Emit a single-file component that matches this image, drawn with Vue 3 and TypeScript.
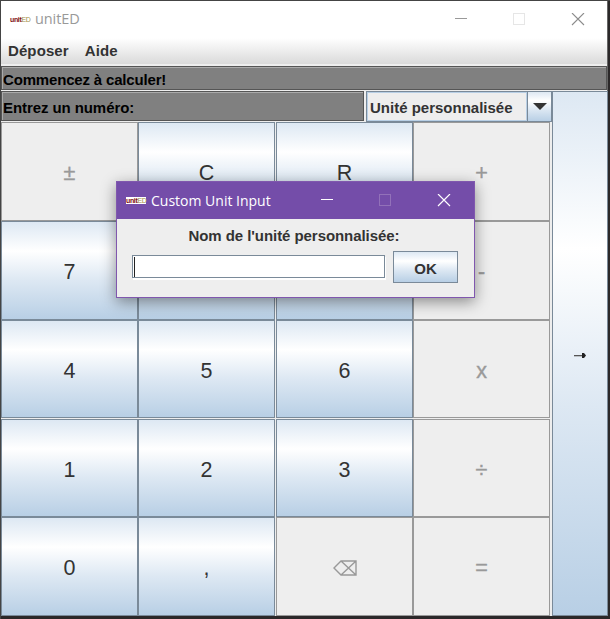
<script setup lang="ts">
interface Key {
  label: string
  disabled?: boolean
  icon?: boolean
}

const menus: string[] = ['Déposer', 'Aide']
const keys: Key[] = [
  { label: '±', disabled: true }, { label: 'C' }, { label: 'R' }, { label: '+', disabled: true },
  { label: '7' }, { label: '8' }, { label: '9' }, { label: '-', disabled: true },
  { label: '4' }, { label: '5' }, { label: '6' }, { label: 'x', disabled: true },
  { label: '1' }, { label: '2' }, { label: '3' }, { label: '÷', disabled: true },
  { label: '0' }, { label: ',' }, { label: '⌫', disabled: true, icon: true }, { label: '=', disabled: true },
]
</script>

<template>
  <div class="desktop">
    <main class="window">
      <header class="titlebar">
        <span class="logo"><b>unit</b><i>ED</i></span>
        <span class="title">unitED</span>
        <svg class="controls" width="130" height="14" viewBox="0 0 130 14" fill="none">
          <path d="M0 5.5H12" stroke="#999" />
          <rect x="58.5" y="0.5" width="11" height="11" stroke="#e6e6e6" />
          <path d="M117 0L129 12M129 0L117 12" stroke="#8c8c8c" stroke-width="1.1" />
        </svg>
      </header>
      <nav class="menubar">
        <span v-for="m in menus" :key="m">{{ m }}</span>
      </nav>
      <div class="field status"><span>Commencez à calculer!</span></div>
      <div class="body">
        <section class="left">
          <div class="inputs">
            <div class="field prompt"><span>Entrez un numéro:</span></div>
            <div class="combo">
              <span class="value"><em>Unité personnalisée</em></span>
              <span class="drop">
                <svg width="14" height="7" viewBox="0 0 14 7"><path d="M0 0H14L7 7Z" fill="#333" /></svg>
              </span>
            </div>
          </div>
          <div class="keypad">
            <button v-for="k in keys" :key="k.label" class="key" :class="{ off: k.disabled }">
              <svg v-if="k.icon" width="24" height="16" viewBox="0 0 24 16" fill="none" stroke="#999" stroke-width="1.4">
                <path d="M1 8L8 1H23V15H8ZM8 1L23 15M8 15L23 1" />
              </svg>
              <span v-else>{{ k.label }}</span>
            </button>
          </div>
        </section>
        <button class="convert">
          <svg width="12" height="7" viewBox="0 0 12 7"><path d="M0 3H9V4.3H0Z" fill="#555" /><path d="M8 1H10L12 3.5L10 6H8Z" fill="#222" /></svg>
        </button>
      </div>
    </main>

    <div class="dialog">
      <header class="dialog-title">
        <span class="logo"><b>unit</b><i>ED</i></span>
        <span class="title">Custom Unit Input</span>
        <svg class="controls" width="130" height="14" viewBox="0 0 130 14" fill="none">
          <path d="M0 5.5H12" stroke="#fff" />
          <rect x="58.5" y="0.5" width="11" height="11" stroke="#9271b9" />
          <path d="M117 0L129 12M129 0L117 12" stroke="#fff" stroke-width="1.2" />
        </svg>
      </header>
      <div class="question"><span>Nom de l'unité personnalisée:</span></div>
      <div class="answer">
        <div class="textbox"><span class="caret"></span></div>
        <button class="ok"><span>OK</span></button>
      </div>
    </div>
  </div>
</template>

<style>
body { margin: 0; overflow: hidden; }
</style>

<style scoped>
* { box-sizing: border-box; }
.desktop {
  position: relative;
  width: 610px;
  height: 619px;
  padding: 1px 0 0 1px;
  background: #2b2829;
  box-shadow: inset 1px 1px #444;
  font: bold 15px/18px "Liberation Sans", Arial, sans-serif;
  color: #333;
}
.window { width: 607px; height: 615px; background: #eee; border-right: 1px solid #666; display: flex; flex-direction: column; }
.titlebar { height: 37px; flex: none; background: #fff; display: flex; align-items: center; padding: 0 22px 0 9px; }
.logo {
  width: 20px; height: 7px; background: #fff; display: flex; align-items: center; justify-content: center;
  font: bold 7px/7px "Liberation Sans", Arial, sans-serif; letter-spacing: -.3px; white-space: nowrap;
}
.logo b { color: #7d1010; }
.logo i { color: #a39049; font-style: normal; font-weight: normal; letter-spacing: -.6px; }
.title { font: 15px/20px "Open Sans", "Noto Sans", sans-serif; }
.titlebar .title { color: #999; margin-left: 5px; font-size: 14.5px; letter-spacing: -.1px; padding-bottom: 1px; }
.controls { margin-left: auto; flex: none; }
.menubar { height: 28px; flex: none; display: flex; gap: 16px; padding: 3px 7px 0; letter-spacing: .1px; background: linear-gradient(#fff, #dadada 26px, #eee 26px); }
.menubar span { height: 20px; line-height: 20px; }
.field { background: #808080; border: 1px solid #555; box-shadow: inset 1px 1px #aaa; color: #000; display: flex; align-items: center; padding-left: 1px; }
.status { height: 24px; width: 606px; margin-bottom: 1px; flex: none; letter-spacing: -.17px; }
.status span { padding-top: 3px; }
.body { display: flex; gap: 2px; height: 525px; }
.left { width: 549px; flex: none; }
.inputs { display: flex; gap: 2px; height: 31px; width: 551px; }
.prompt { width: 363px; height: 30px; flex: none; letter-spacing: -.08px; }
.prompt span { padding-top: 3px; }
.combo { width: 186px; height: 31px; display: flex; border: 1px solid #7a8a99; }
.value { flex: 1; border: 1px solid #b8cfe5; display: flex; align-items: center; padding: 3px 0 0 2px; white-space: nowrap; }
.value em { font-style: normal; }
.drop { width: 24px; border-left: 1px solid #7a8a99; display: grid; place-items: center; background: linear-gradient(#dde8f3, #fff 30%, #dde8f3 60%, #b8cfe5); }
.keypad { display: grid; grid-template-columns: 137px 138px 137px 137px; grid-template-rows: 99px 99px 99px 98px 99px; }
button { margin: 0; padding: 0; font: inherit; color: #333; border: 1px solid #7a8a99; border-radius: 0; background: linear-gradient(#dde8f3, #fff 30%, #dde8f3 60%, #b8cfe5); display: flex; align-items: center; justify-content: center; }
.key { font-weight: normal; font-size: 21.5px; line-height: 24px; padding-top: 3px; }
.key:nth-child(4n + 2) { margin-right: 1px; }
.key:nth-child(n + 9):nth-child(-n + 12) { margin-bottom: 1px; }
.off { background: #eee; border-color: #999; color: #999; }
.off span { -webkit-text-stroke: .4px #999; }
.convert { width: 56px; height: 525px; flex: none; padding-top: 4px; }
.dialog {
  position: absolute;
  left: 116px;
  top: 181px;
  width: 359px;
  height: 117px;
  border: 1px solid #8057ae;
  background: #eee;
  box-shadow: 0 4px 14px rgba(0, 0, 0, .42);
}
.dialog-title { height: 37px; background: #744da9; display: flex; align-items: center; padding: 0 23px 0 9px; color: #fff; }
.dialog-title .title { margin-left: 5px; font-size: 14px; }
.question { height: 32px; padding-top: 8px; text-align: center; white-space: nowrap; padding-right: 3px; letter-spacing: -.06px; }
.answer { display: flex; padding-left: 15px; gap: 8px; }
.textbox { width: 253px; height: 23px; margin-top: 4px; border: 1px solid #7a8a99; background: #fff; box-shadow: 1px 2px #fff; padding: 1px; }
.caret { display: block; width: 1px; height: 20px; background: #222; }
.ok { width: 65px; height: 32px; padding-top: 3px; }
</style>
